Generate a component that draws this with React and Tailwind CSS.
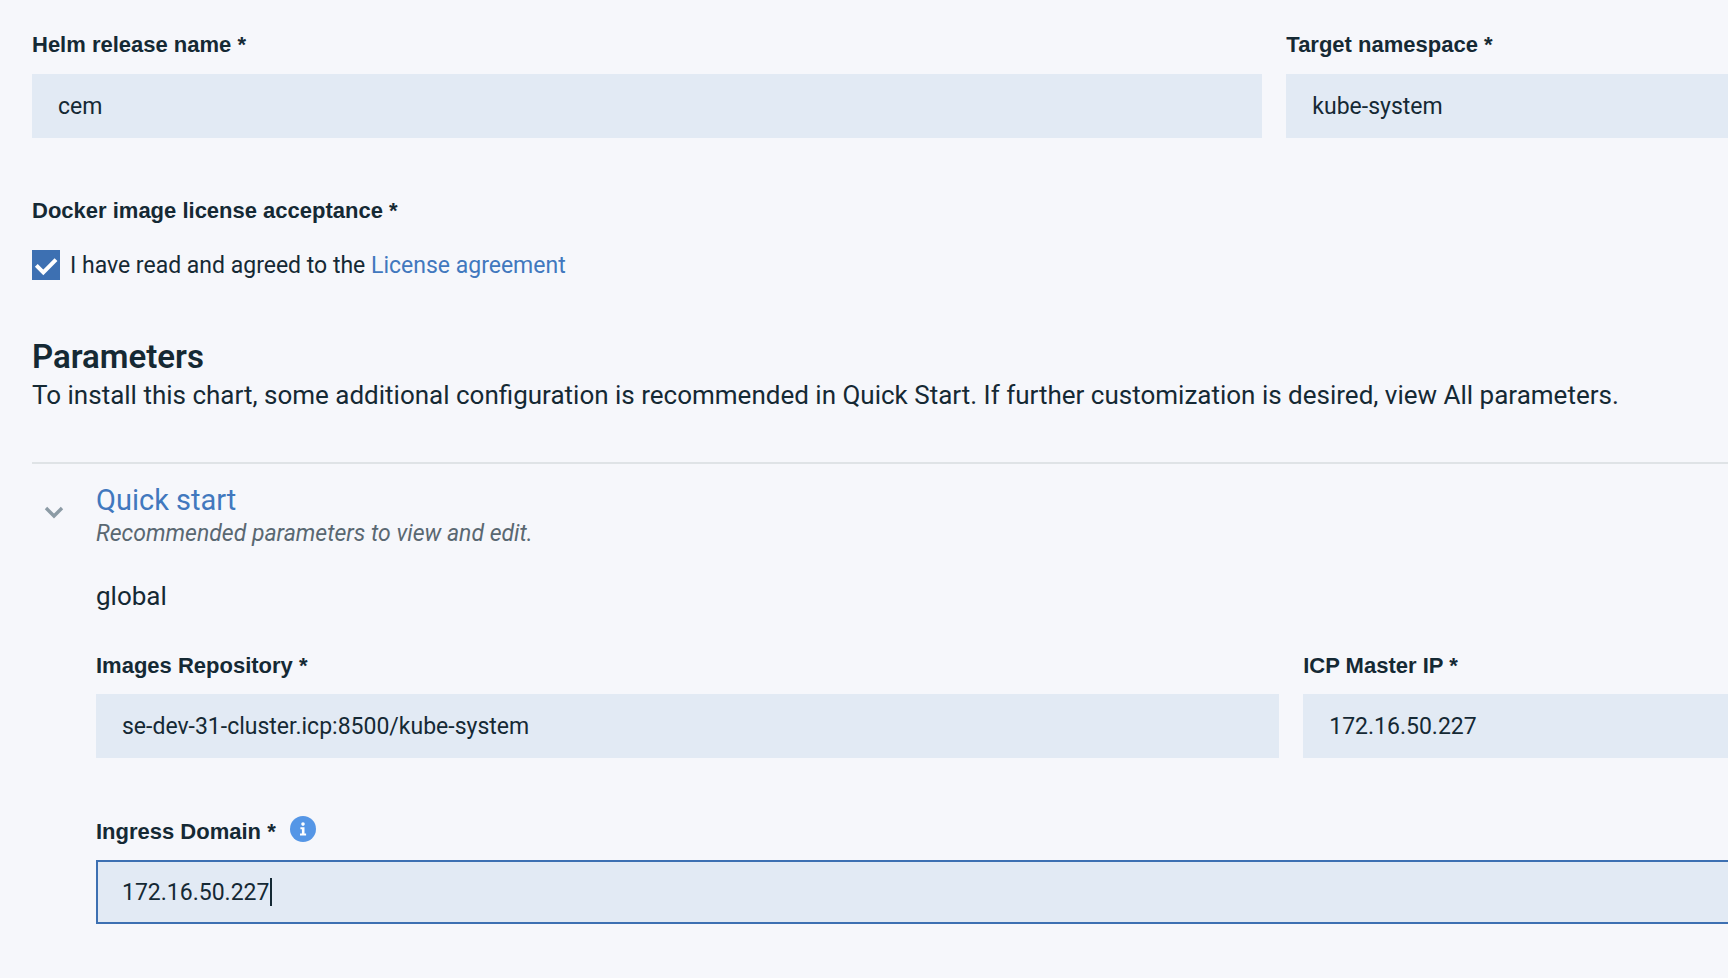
import React, { useState } from "react";

function Label({ htmlFor, children }) {
  return (
    <label
      htmlFor={htmlFor}
      className="block whitespace-nowrap font-['Liberation_Sans',sans-serif] text-[22px] leading-7 font-bold"
    >
      {children}
    </label>
  );
}

function TextInput({ id, value, active = false }) {
  return (
    <input
      id={id}
      type="text"
      defaultValue={value}
      className={`block h-16 w-full border-2 px-6 text-[23px] outline-none ${
        active
          ? "border-[#3d70b2] bg-[#e2eaf4]"
          : "border-transparent bg-[#e2eaf4] focus:border-[#3d70b2]"
      }`}
    />
  );
}

function InfoIcon() {
  return (
    <svg viewBox="0 0 26 26" className="size-[26px]" aria-hidden="true">
      <circle cx="13" cy="13" r="13" fill="#5596e6" />
      <circle cx="13" cy="8.1" r="1.8" fill="#fff" />
      <path d="M10.4 11.2h4.1v6.4h1.6v2H10v-2h1.9v-4.4h-1.5z" fill="#fff" />
    </svg>
  );
}

export default function App() {
  const [accepted, setAccepted] = useState(true);
  const [open, setOpen] = useState(true);

  return (
    <main className="min-h-screen overflow-x-hidden bg-[#f6f7fb] pt-[31px] pb-10 pl-8 font-['Roboto',sans-serif] text-[#152934]">
      <form onSubmit={(e) => e.preventDefault()}>
        <div className="grid grid-cols-[39fr_14fr] gap-x-6">
          <div className="flex min-w-0 flex-col gap-[15px]">
            <Label htmlFor="release">Helm release name *</Label>
            <TextInput id="release" value="cem" />
          </div>
          <div className="flex min-w-0 flex-col gap-[15px]">
            <Label htmlFor="namespace">Target namespace *</Label>
            <TextInput id="namespace" value="kube-system" />
          </div>
        </div>

        <fieldset className="mt-[59px]">
          <legend className="font-['Liberation_Sans',sans-serif] text-[22px] leading-7 font-bold">
            Docker image license acceptance *
          </legend>
          <div className="mt-[25px] flex items-end gap-2.5">
            <span className="grid h-[30px] w-7">
              <input
                id="license"
                type="checkbox"
                checked={accepted}
                onChange={(e) => setAccepted(e.target.checked)}
                className="col-start-1 row-start-1 h-[30px] w-7 appearance-none border-2 border-[#3d70b2] checked:bg-[#3d70b2]"
              />
              {accepted && (
                <svg
                  viewBox="0 0 28 30"
                  className="pointer-events-none col-start-1 row-start-1 h-[30px] w-7"
                  aria-hidden="true"
                >
                  <path d="M4.3 15.4 11.3 22.4 24 9.6" fill="none" stroke="#fff" strokeWidth="4" />
                </svg>
              )}
            </span>
            <p className="text-[23px] leading-7">
              <label htmlFor="license">I have read and agreed to the</label>{" "}
              <a href="#license-agreement" className="text-[#4178be]">
                License agreement
              </a>
            </p>
          </div>
        </fieldset>

        <h2 className="mt-[57px] text-[33px] leading-10 font-semibold">Parameters</h2>
        <p className="text-[26px] leading-9">
          To install this chart, some additional configuration is recommended in Quick Start. If
          further customization is desired, view All parameters.
        </p>

        <section className="mt-[49px] border-t-2 border-[#dfe3e6] pt-[18px]">
          <button
            type="button"
            aria-expanded={open}
            onClick={() => setOpen(!open)}
            className="flex w-full items-center text-left"
          >
            <span className="w-16 pb-1.5 pl-3">
              <svg viewBox="0 0 20 14" className="h-3.5 w-5" aria-hidden="true">
                <path d="M2 2 10 10 18 2" fill="none" stroke="#8c9ba5" strokeWidth="3.4" />
              </svg>
            </span>
            <span className="flex flex-col">
              <span className="text-[29px] leading-9 text-[#4178be]">Quick start</span>
              <span className="text-[23px] leading-8 text-[#5a6872] italic">
                Recommended parameters to view and edit.
              </span>
            </span>
          </button>

          {open && (
            <div className="mt-7 pl-16">
              <h3 className="text-[26px] leading-9">global</h3>

              <div className="mt-[38px] grid grid-cols-[39fr_14fr] gap-x-6">
                <div className="flex min-w-0 flex-col gap-3.5">
                  <Label htmlFor="repository">Images Repository *</Label>
                  <TextInput id="repository" value="se-dev-31-cluster.icp:8500/kube-system" />
                </div>
                <div className="flex min-w-0 flex-col gap-3.5">
                  <Label htmlFor="master-ip">ICP Master IP *</Label>
                  <TextInput id="master-ip" value="172.16.50.227" />
                </div>
              </div>

              <div className="mt-[60px] flex flex-col gap-3.5">
                <div className="flex h-7 items-start gap-3.5">
                  <Label htmlFor="ingress">Ingress Domain *</Label>
                  <button type="button" aria-label="About ingress domain" className="-mt-0.5">
                    <InfoIcon />
                  </button>
                </div>
                <div className="-mr-1 grid items-center overflow-hidden">
                  <div className="col-start-1 row-start-1">
                    <TextInput id="ingress" value="172.16.50.227" active />
                  </div>
                  <span
                    aria-hidden="true"
                    className="pointer-events-none col-start-1 row-start-1 ml-[174px] h-7 w-0.5 bg-[#152934]"
                  />
                </div>
              </div>
            </div>
          )}
        </section>
      </form>
    </main>
  );
}
